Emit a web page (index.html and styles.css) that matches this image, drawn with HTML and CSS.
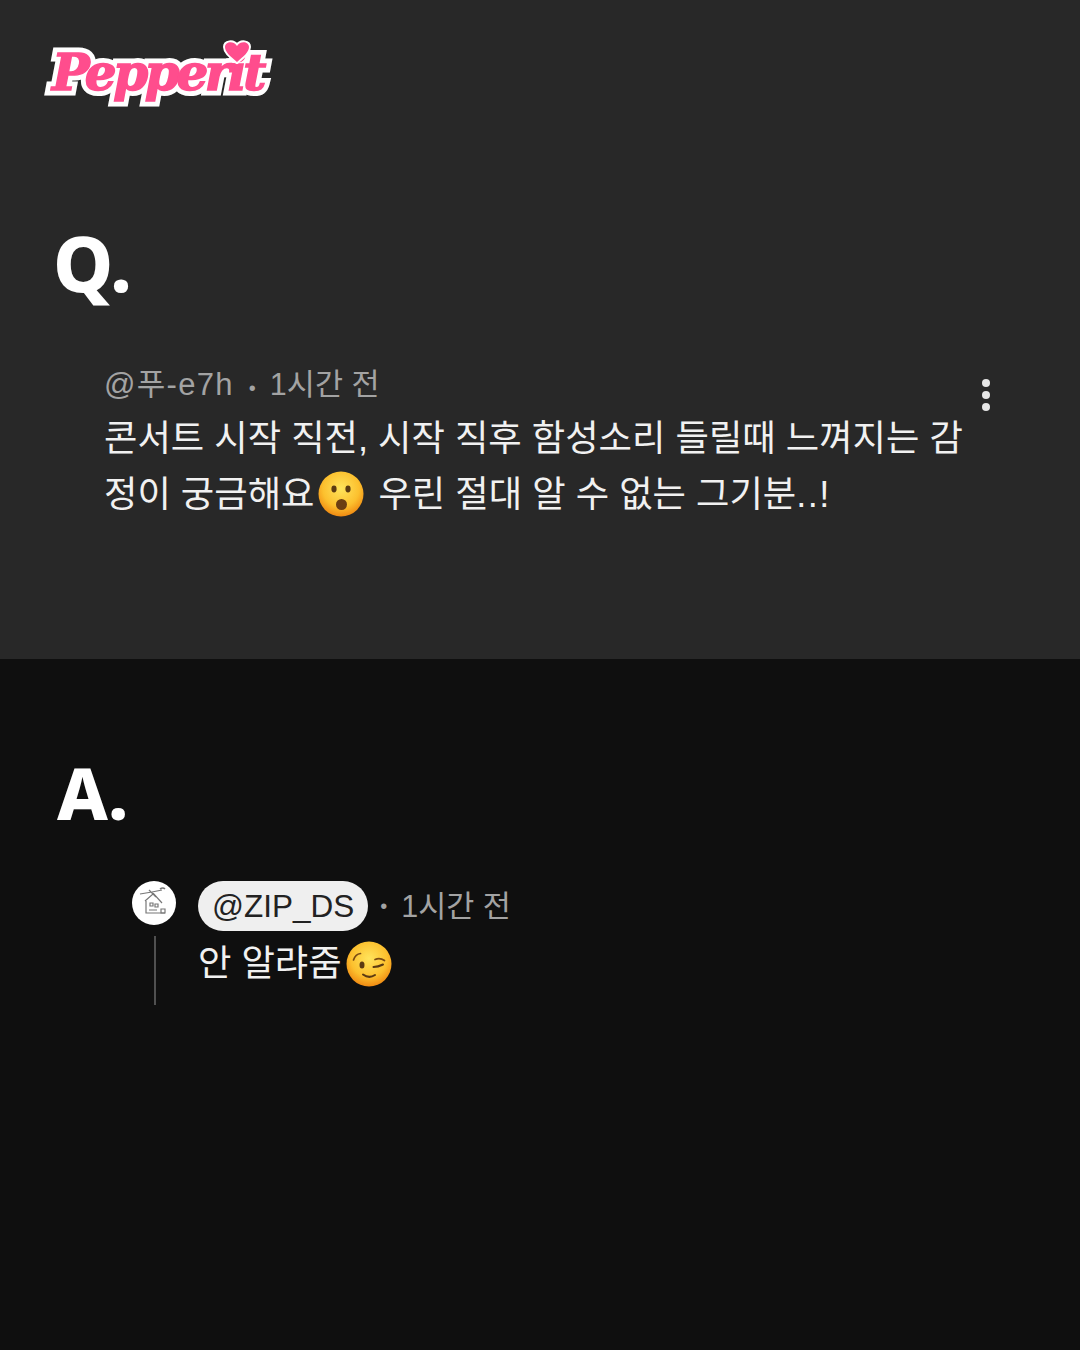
FILE: index.html
```html
<!DOCTYPE html>
<html lang="ko">
<head>
    <meta charset="UTF-8">
    <meta name="viewport" content="width=device-width, initial-scale=1.0">
    <title>Pepperit Q&amp;A</title>
    <link rel="stylesheet" href="styles.css">
</head>
<body>
    <section class="question">
        <div class="logo">
            <span class="logo-text" data-text="Pepperit">Pepperit</span>
            <svg class="logo-heart" width="30" height="26" viewBox="0 0 30 26">
                <path d="M15 23 C8 17 3 13 3 8 C3 3 11 1 15 7 C19 1 27 3 27 8 C27 13 22 17 15 23 Z" fill="#ff4d8d" stroke="#fff" stroke-width="4" paint-order="stroke" stroke-linejoin="round"/>
            </svg>
        </div>
        <h2 class="mark mark-q">Q.</h2>
        <div class="comment">
            <div class="comment-body">
                <div class="meta"><span class="meta-name">@푸-e7h</span><span class="dot">•</span><span class="time">1시간 전</span></div>
                <p class="text">콘서트 시작 직전, 시작 직후 함성소리 들릴때 느껴지는 감<br>정이 궁금해요<svg class="emoji emoji-gap" width="46" height="46" viewBox="0 0 46 46">
                    <defs>
                        <radialGradient id="faceA" cx="50%" cy="38%" r="62%">
                            <stop offset="0" stop-color="#ffe45c"/>
                            <stop offset="0.65" stop-color="#fcc02e"/>
                            <stop offset="1" stop-color="#f08a12"/>
                        </radialGradient>
                    </defs>
                    <circle cx="23" cy="23" r="22.5" fill="url(#faceA)"/>
                    <ellipse cx="16" cy="18" rx="2.6" ry="3.4" fill="#5b3a12"/>
                    <ellipse cx="30" cy="18" rx="2.6" ry="3.4" fill="#5b3a12"/>
                    <ellipse cx="23.5" cy="33.5" rx="5.5" ry="5.5" fill="#6b3d12"/>
                </svg>우린 절대 알 수 없는 그기분<span class="dots">..!</span></p>
            </div>
            <svg class="more" width="10" height="36" viewBox="0 0 10 36">
                <circle cx="5" cy="5" r="4" fill="#e6e6e6"/>
                <circle cx="5" cy="17" r="4" fill="#e6e6e6"/>
                <circle cx="5" cy="29" r="4" fill="#e6e6e6"/>
            </svg>
        </div>
    </section>

    <section class="answer">
        <h2 class="mark mark-a">A.</h2>
        <div class="reply">
            <div class="reply-side">
                <div class="avatar">
                    <svg width="44" height="44" viewBox="0 0 44 44" fill="none" stroke="#777" stroke-width="1.2">
                        <path d="M13 20 L21.5 12.5 L30 22"/>
                        <path d="M14 20 V32 H33"/>
                        <path d="M8 13 L20 11 L30 9 M17 9 L24 16"/>
                        <path d="M28 8 q3 -2 5 0" stroke-width="1.6"/>
                        <path d="M18 22 h3 v3 h-3 Z M23 23 h3 v3 h-3 Z M17 29 h8 M29 28 h4 v4 h-4 Z"/>
                    </svg>
                </div>
                <div class="thread-line"></div>
            </div>
            <div class="reply-body">
                <div class="reply-meta">
                    <span class="handle">@ZIP_DS</span>
                    <span class="dot">•</span>
                    <span class="time">1시간 전</span>
                </div>
                <p class="text reply-text">안 알랴줌<svg class="emoji emoji-low" width="46" height="46" viewBox="0 0 46 46">
                    <defs>
                        <radialGradient id="faceB" cx="50%" cy="38%" r="62%">
                            <stop offset="0" stop-color="#ffe45c"/>
                            <stop offset="0.65" stop-color="#fcc02e"/>
                            <stop offset="1" stop-color="#f08a12"/>
                        </radialGradient>
                    </defs>
                    <circle cx="23" cy="23" r="22.5" fill="url(#faceB)"/>
                    <ellipse cx="16" cy="24" rx="2.5" ry="3.6" fill="#5b3a12"/>
                    <path d="M7.5 19 Q9.5 13 14.5 12.5" fill="none" stroke="#7a4a12" stroke-width="1.7" stroke-linecap="round"/>
                    <path d="M29 18.5 Q34 16.5 38.5 19.5" fill="none" stroke="#7a4a12" stroke-width="1.7" stroke-linecap="round"/>
                    <path d="M27.5 26 Q32 26 37 23.5" fill="none" stroke="#5b3a12" stroke-width="2" stroke-linecap="round"/>
                    <path d="M17 33.5 Q23 38 29 34" fill="none" stroke="#5b3a12" stroke-width="2" stroke-linecap="round"/>
                </svg></p>
            </div>
        </div>
    </section>
</body>
</html>
```

FILE: styles.css
```css
body {
    margin: 0;
    background-color: #0f0f0f;
    font-family: "Liberation Sans", "Noto Sans CJK KR", sans-serif;
    color: #f1f1f1;
}
.question {
    position: relative;
    z-index: 0;
    height: 659px;
    box-sizing: border-box;
    padding: 36px 0 0 55px;
    background-color: #282828;
}
.answer {
    height: 691px;
    box-sizing: border-box;
    padding: 88px 0 0 57px;
    background-color: #0f0f0f;
}
.logo {
    position: relative;
    width: 230px;
    height: 74px;
    margin-left: -3px;
}
.logo-text {
    position: relative;
    display: block;
    font-family: "DejaVu Serif", serif;
    font-weight: 700;
    font-style: italic;
    font-size: 50px;
    line-height: 74px;
    letter-spacing: -3.4px;
    color: #ff4d8d;
    -webkit-text-stroke: 1.5px #ff4d8d;
    white-space: nowrap;
}
.logo-text::before {
    content: attr(data-text);
    position: absolute;
    left: 0;
    top: 0;
    z-index: -1;
    -webkit-text-stroke: 11px #fff;
}
.logo-heart {
    position: absolute;
    left: 170px;
    top: 3px;
}
.mark {
    margin: 0;
    font-family: "Noto Sans", sans-serif;
    font-weight: 800;
    line-height: 90px;
    color: #fff;
}
.mark-q {
    margin: 108px 0 0 -2px;
    font-size: 76px;
}
.mark-a {
    font-size: 72px;
}
.comment {
    display: flex;
    margin-top: 52px;
    padding-left: 49px;
}
.comment-body {
    width: 877px;
}
.meta {
    margin-bottom: -3px;
    line-height: 48px;
    color: #a3a3a3;
}
.meta-name {
    font-size: 31px;
    letter-spacing: 1.3px;
}
.meta .dot {
    margin: 0 14px 0 15px;
    font-size: 20px;
}
.more {
    margin-top: 18px;
}
.text {
    margin: 0;
    font-size: 36.3px;
    line-height: 56px;
    color: #f1f1f1;
}
.dots {
    letter-spacing: 1.5px;
}
.emoji {
    vertical-align: -10px;
    margin-left: 4px;
}
.emoji-gap {
    margin-right: 14px;
}
.emoji-low {
    vertical-align: -11px;
}
.reply {
    display: flex;
    margin-top: 44px;
    padding-left: 75px;
}
.reply-side {
    display: flex;
    flex-direction: column;
    align-items: center;
    width: 44px;
}
.avatar {
    width: 44px;
    height: 44px;
    border-radius: 50%;
    background-color: #fff;
}
.avatar svg {
    display: block;
}
.thread-line {
    width: 2px;
    height: 69px;
    margin: 11px 0 0 2px;
    background-color: #505050;
}
.reply-body {
    margin-left: 22px;
}
.reply-meta {
    display: flex;
    align-items: center;
    color: #a3a3a3;
}
.handle {
    padding: 0 14px;
    height: 50px;
    line-height: 50px;
    border-radius: 25px;
    background-color: #efefef;
    color: #222;
    font-size: 31.5px;
}
.reply-meta .dot {
    margin: 0 14px 0 12px;
    font-size: 20px;
}
.time {
    font-size: 30.5px;
}
.reply-meta .time {
    margin-top: -4px;
}
.reply-text {
    margin-top: 5px;
}
```
